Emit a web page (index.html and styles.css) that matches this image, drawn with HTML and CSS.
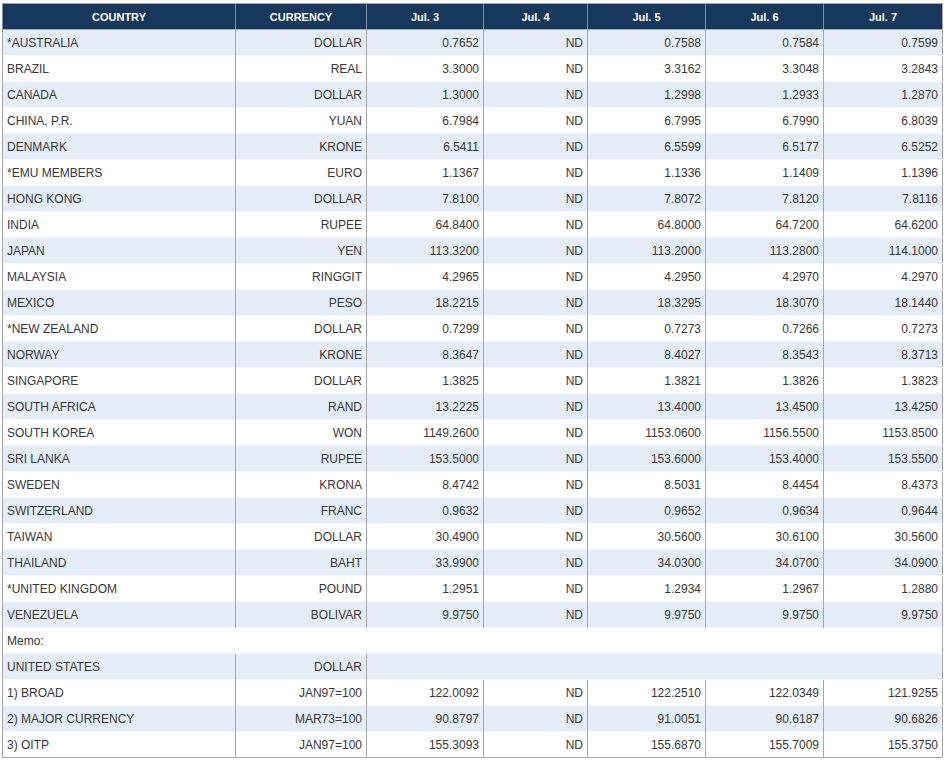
FILE: index.html
```html
<!DOCTYPE html>
<html>
<head>
<meta charset="utf-8">
<link rel="stylesheet" href="styles.css">
</head>
<body>
<table class="rates">
<colgroup>
<col class="c-country"><col class="c-currency"><col class="c-d1"><col class="c-d2"><col class="c-d3"><col class="c-d4"><col class="c-d5">
</colgroup>
<thead>
<tr><th>COUNTRY</th><th>CURRENCY</th><th>Jul. 3</th><th>Jul. 4</th><th>Jul. 5</th><th>Jul. 6</th><th>Jul. 7</th></tr>
</thead>
<tbody>
<tr class="alt"><td class="name">*AUSTRALIA</td><td>DOLLAR</td><td>0.7652</td><td>ND</td><td>0.7588</td><td>0.7584</td><td>0.7599</td></tr>
<tr><td class="name">BRAZIL</td><td>REAL</td><td>3.3000</td><td>ND</td><td>3.3162</td><td>3.3048</td><td>3.2843</td></tr>
<tr class="alt"><td class="name">CANADA</td><td>DOLLAR</td><td>1.3000</td><td>ND</td><td>1.2998</td><td>1.2933</td><td>1.2870</td></tr>
<tr><td class="name">CHINA, P.R.</td><td>YUAN</td><td>6.7984</td><td>ND</td><td>6.7995</td><td>6.7990</td><td>6.8039</td></tr>
<tr class="alt"><td class="name">DENMARK</td><td>KRONE</td><td>6.5411</td><td>ND</td><td>6.5599</td><td>6.5177</td><td>6.5252</td></tr>
<tr><td class="name">*EMU MEMBERS</td><td>EURO</td><td>1.1367</td><td>ND</td><td>1.1336</td><td>1.1409</td><td>1.1396</td></tr>
<tr class="alt"><td class="name">HONG KONG</td><td>DOLLAR</td><td>7.8100</td><td>ND</td><td>7.8072</td><td>7.8120</td><td>7.8116</td></tr>
<tr><td class="name">INDIA</td><td>RUPEE</td><td>64.8400</td><td>ND</td><td>64.8000</td><td>64.7200</td><td>64.6200</td></tr>
<tr class="alt"><td class="name">JAPAN</td><td>YEN</td><td>113.3200</td><td>ND</td><td>113.2000</td><td>113.2800</td><td>114.1000</td></tr>
<tr><td class="name">MALAYSIA</td><td>RINGGIT</td><td>4.2965</td><td>ND</td><td>4.2950</td><td>4.2970</td><td>4.2970</td></tr>
<tr class="alt"><td class="name">MEXICO</td><td>PESO</td><td>18.2215</td><td>ND</td><td>18.3295</td><td>18.3070</td><td>18.1440</td></tr>
<tr><td class="name">*NEW ZEALAND</td><td>DOLLAR</td><td>0.7299</td><td>ND</td><td>0.7273</td><td>0.7266</td><td>0.7273</td></tr>
<tr class="alt"><td class="name">NORWAY</td><td>KRONE</td><td>8.3647</td><td>ND</td><td>8.4027</td><td>8.3543</td><td>8.3713</td></tr>
<tr><td class="name">SINGAPORE</td><td>DOLLAR</td><td>1.3825</td><td>ND</td><td>1.3821</td><td>1.3826</td><td>1.3823</td></tr>
<tr class="alt"><td class="name">SOUTH AFRICA</td><td>RAND</td><td>13.2225</td><td>ND</td><td>13.4000</td><td>13.4500</td><td>13.4250</td></tr>
<tr><td class="name">SOUTH KOREA</td><td>WON</td><td>1149.2600</td><td>ND</td><td>1153.0600</td><td>1156.5500</td><td>1153.8500</td></tr>
<tr class="alt"><td class="name">SRI LANKA</td><td>RUPEE</td><td>153.5000</td><td>ND</td><td>153.6000</td><td>153.4000</td><td>153.5500</td></tr>
<tr><td class="name">SWEDEN</td><td>KRONA</td><td>8.4742</td><td>ND</td><td>8.5031</td><td>8.4454</td><td>8.4373</td></tr>
<tr class="alt"><td class="name">SWITZERLAND</td><td>FRANC</td><td>0.9632</td><td>ND</td><td>0.9652</td><td>0.9634</td><td>0.9644</td></tr>
<tr><td class="name">TAIWAN</td><td>DOLLAR</td><td>30.4900</td><td>ND</td><td>30.5600</td><td>30.6100</td><td>30.5600</td></tr>
<tr class="alt"><td class="name">THAILAND</td><td>BAHT</td><td>33.9900</td><td>ND</td><td>34.0300</td><td>34.0700</td><td>34.0900</td></tr>
<tr><td class="name">*UNITED KINGDOM</td><td>POUND</td><td>1.2951</td><td>ND</td><td>1.2934</td><td>1.2967</td><td>1.2880</td></tr>
<tr class="alt"><td class="name">VENEZUELA</td><td>BOLIVAR</td><td>9.9750</td><td>ND</td><td>9.9750</td><td>9.9750</td><td>9.9750</td></tr>
<tr class="memo"><td class="name" colspan="7">Memo:</td></tr>
<tr class="alt"><td class="name">UNITED STATES</td><td>DOLLAR</td><td colspan="5"></td></tr>
<tr><td class="name">1) BROAD</td><td>JAN97=100</td><td>122.0092</td><td>ND</td><td>122.2510</td><td>122.0349</td><td>121.9255</td></tr>
<tr class="alt"><td class="name">2) MAJOR CURRENCY</td><td>MAR73=100</td><td>90.8797</td><td>ND</td><td>91.0051</td><td>90.6187</td><td>90.6826</td></tr>
<tr><td class="name">3) OITP</td><td>JAN97=100</td><td>155.3093</td><td>ND</td><td>155.6870</td><td>155.7009</td><td>155.3750</td></tr>
</tbody>
</table>
</body>
</html>
```

FILE: styles.css
```css
html, body {
  margin: 0;
  padding: 0;
  background: #ffffff;
}
body {
  padding: 3px 0 0 2px;
  font-family: "Liberation Sans", Arial, sans-serif;
  font-size: 12px;
  color: #383838;
}
.rates {
  border-collapse: collapse;
  table-layout: fixed;
  width: 940px;
  border: 1px solid #a7a7a7;
}
.c-country { width: 233px; }
.c-currency { width: 131px; }
.c-d1 { width: 117px; }
.c-d2 { width: 104px; }
.c-d3 { width: 118px; }
.c-d4 { width: 118px; }
.c-d5 { width: 119px; }
.rates th {
  height: 25px;
  padding: 0 4px;
  background: #17375c;
  color: #ffffff;
  font-size: 11px;
  font-weight: bold;
  text-align: center;
  border-left: 1px solid #7f8fa3;
  border-bottom: 1px solid #a7a7a7;
}
.rates td {
  height: 25px;
  padding: 0 4px;
  text-align: right;
  border-left: 1px solid #a7a7a7;
  border-top: 1px solid #f4f8fc;
  white-space: nowrap;
}
.rates td.name {
  text-align: left;
}
.rates tr.alt td {
  background: #e5eef8;
}
.rates tr.memo td {
  background: #ffffff;
}
```
